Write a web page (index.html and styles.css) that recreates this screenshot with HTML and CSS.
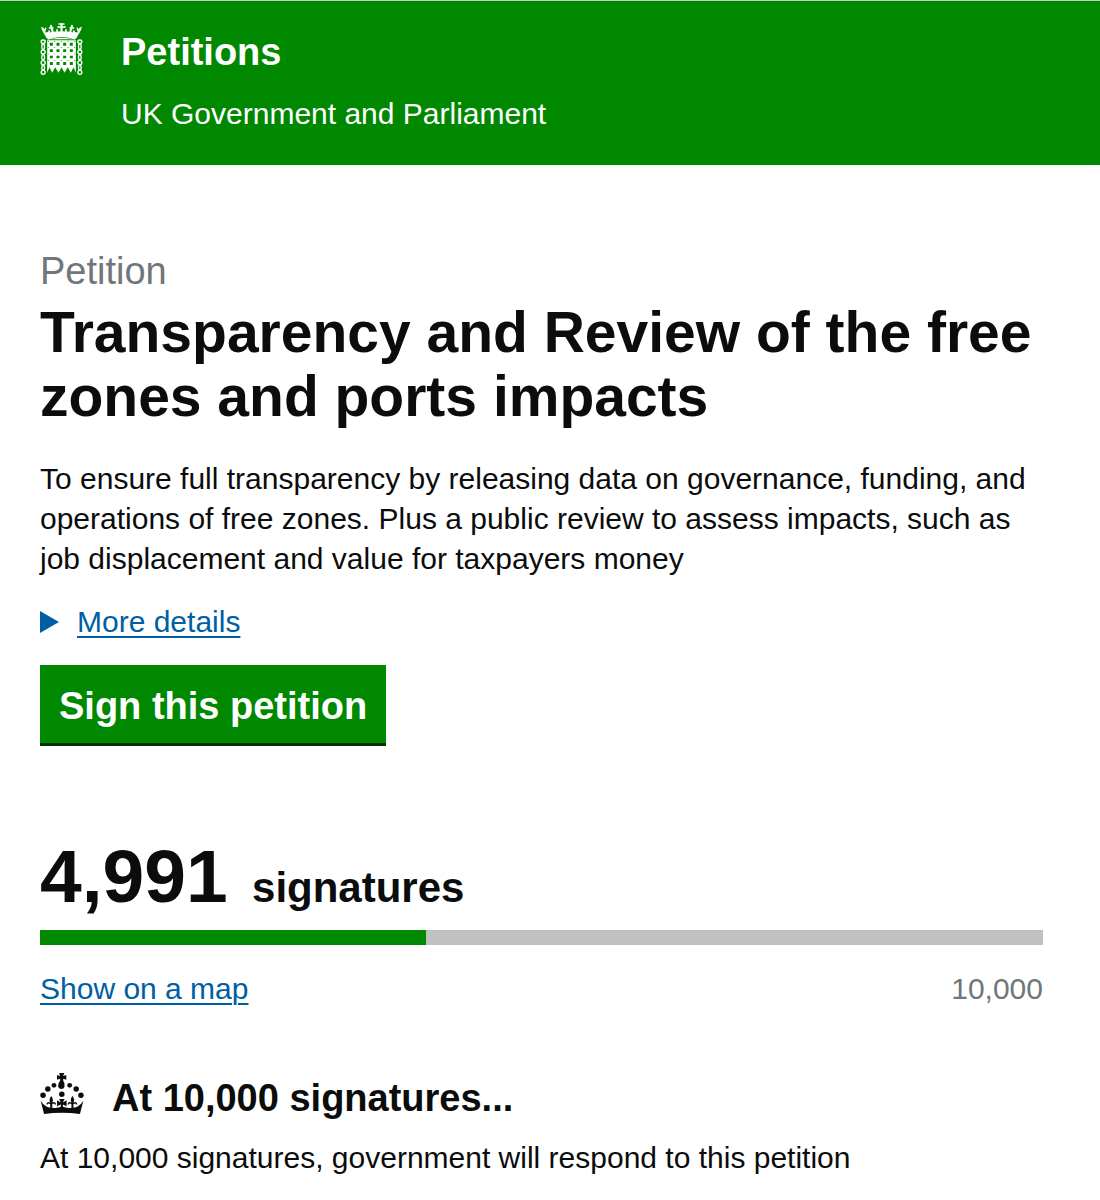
FILE: index.html
```html
<!DOCTYPE html>
<html lang="en">
<head>
  <meta charset="UTF-8">
  <meta name="viewport" content="width=device-width, initial-scale=1.0">
  <title>Transparency and Review of the free zones and ports impacts - Petitions</title>
  <link rel="stylesheet" href="styles.css">
</head>
<body>
  <header class="header">
    <svg class="portcullis" viewBox="0 0 126 156" aria-hidden="true">
      <!-- crown -->
      <g fill="none" stroke="#fff" stroke-width="6">
        <path d="M5 16 L21 44 M121 16 L105 44"/>
        <path d="M3 13 L14 22 L16 14 M123 13 L112 22 L110 14" stroke-width="4"/>
        <path d="M31 6 L38 32 M95 6 L88 32 M63 2 V30"/>
        <path d="M25 15 L39 15 M101 15 L87 15 M54 3 H72 M53 12 H73 M53 9 V15 M73 9 V15" stroke-width="4"/>
        <path d="M17 29 Q25 34 27 22 M109 29 Q101 34 99 22 M41 29 Q53 32 49 19 M85 29 Q73 32 77 19" stroke-width="5"/>
      </g>
      <path fill="#fff" d="M14 31 Q63 18 112 31 L104 50 Q63 34 22 50 Z"/>
      <path fill="#fff" d="M27 49 Q63 40 99 49 Z"/>
      <!-- gate -->
      <path fill="#fff" fill-rule="evenodd" d="M20 52 H106 V149 L99 133 L91 149 L82 133 L72 149 L63 133 L54 149 L44 133 L35 149 L27 133 L20 149 Z
        M28 59 h9 v9 h-9z M48 59 h9 v9 h-9z M68 59 h9 v9 h-9z M88 59 h9 v9 h-9z
        M28 79 h9 v8 h-9z M48 79 h9 v8 h-9z M68 79 h9 v8 h-9z M88 79 h9 v8 h-9z
        M28 98 h9 v8 h-9z M48 98 h9 v8 h-9z M68 98 h9 v8 h-9z M88 98 h9 v8 h-9z
        M28 117 h9 v9 h-9z M48 117 h9 v9 h-9z M68 117 h9 v9 h-9z M88 117 h9 v9 h-9z"/>
      <path fill="#008800" d="M22 54h3v2h-3z M41 54h3v2h-3z M61 54h3v2h-3z M81 54h3v2h-3z M101 54h3v2h-3z M22 73h3v2h-3z M41 73h3v2h-3z M61 73h3v2h-3z M81 73h3v2h-3z M101 73h3v2h-3z M22 92h3v2h-3z M41 92h3v2h-3z M61 92h3v2h-3z M81 92h3v2h-3z M101 92h3v2h-3z M22 111h3v2h-3z M41 111h3v2h-3z M61 111h3v2h-3z M81 111h3v2h-3z M101 111h3v2h-3z"/>
      <!-- chains -->
      <g fill="none" stroke="#fff" stroke-width="4">
        <ellipse cx="8" cy="56" rx="6" ry="5"/><ellipse cx="8" cy="71" rx="4" ry="8"/><ellipse cx="8" cy="87" rx="6" ry="6"/><ellipse cx="8" cy="103" rx="4" ry="8"/><ellipse cx="8" cy="119" rx="6" ry="6"/><ellipse cx="8" cy="134" rx="4" ry="7"/><circle cx="8" cy="148" r="6"/>
        <ellipse cx="118" cy="56" rx="6" ry="5"/><ellipse cx="118" cy="71" rx="4" ry="8"/><ellipse cx="118" cy="87" rx="6" ry="6"/><ellipse cx="118" cy="103" rx="4" ry="8"/><ellipse cx="118" cy="119" rx="6" ry="6"/><ellipse cx="118" cy="134" rx="4" ry="7"/><circle cx="118" cy="148" r="6"/>
      </g>
    </svg>
    <div class="header-text">
      <a class="header-title" href="#">Petitions</a>
      <p class="header-sub">UK Government and Parliament</p>
    </div>
  </header>

  <main class="content">
    <h1 class="page-title"><span class="context">Petition</span> Transparency and Review of the free zones and ports impacts</h1>

    <p class="intro">To ensure full transparency by releasing data on governance, funding, and operations of free zones. Plus a public review to assess impacts, such as job displacement and value for taxpayers money</p>

    <details class="more">
      <summary><span class="link">More details</span></summary>
    </details>

    <button class="sign-button" type="button">Sign this petition</button>

    <section class="signatures">
      <p class="count"><span class="count-number">4,991</span> <span class="count-label">signatures</span></p>
      <div class="graph"><div class="graph-bar" style="width: 38.5%"></div></div>
      <div class="graph-info">
        <a class="link" href="#">Show on a map</a>
        <span class="goal">10,000</span>
      </div>
    </section>

    <section class="threshold">
      <h2 class="threshold-title">
        <svg class="crown" viewBox="0 0 127 120" aria-hidden="true">
          <g fill="#0b0c0c">
            <path d="M55 0 H70 L67 9 L76 6 V20 L67 17 V23 Q73 30 71 40 Q69 47 62 47 Q55 47 52 40 Q51 30 58 23 V17 L49 20 V6 L58 9 Z"/>
            <circle cx="40" cy="36" r="7"/><circle cx="22" cy="47" r="8"/><circle cx="8" cy="65" r="8"/>
            <circle cx="86" cy="36" r="7"/><circle cx="105" cy="47" r="8"/><circle cx="119" cy="65" r="8"/>
            <circle cx="63" cy="62" r="8"/>
            <!-- band -->
            <path d="M1 81 Q8 93 18 98 Q26 102 32 100 Q40 104 48 102 Q57 101 63 97 Q70 101 79 102 Q87 104 95 100 Q101 102 109 98 Q119 93 126 81 L116 120 Q63 113 11 120 Z"/>
            <!-- fleurs and centre cross -->
            <path d="M32 67 Q40 77 35 87 V102 H29 V87 Q24 77 32 67 Z M94 67 Q102 77 97 87 V102 H91 V87 Q86 77 94 67 Z"/>
            <path d="M55 76 H71 L66 86 L77 80 V97 L66 92 V100 H60 V92 L49 97 V80 L60 86 Z"/>
          </g>
          <path d="M20 92 Q20 84 29 89 H35 Q44 84 44 92 M82 92 Q82 84 91 89 H97 Q106 84 106 92" fill="none" stroke="#0b0c0c" stroke-width="4"/>
        </svg>
        At 10,000 signatures...
      </h2>
      <p class="threshold-text">At 10,000 signatures, government will respond to this petition</p>
    </section>
  </main>
</body>
</html>
```

FILE: styles.css
```css
body {
  margin: 0;
  font-family: "Liberation Sans", Arial, sans-serif;
  font-size: 30px;
  line-height: 40px;
  color: #0b0c0c;
  background-color: #fff;
}
p, h1, h2 {
  margin: 0;
}
.header {
  display: flex;
  gap: 38px;
  padding: 22px 40px 31px;
  border-top: 1px solid #c8ccc8;
  background-color: #008800;
  color: #fff;
}
.portcullis {
  width: 43px;
  height: 52px;
}
.header-text {
  padding-top: 9px;
}
.header-title {
  display: block;
  margin-bottom: 22px;
  font-size: 38px;
  font-weight: bold;
  color: #fff;
  text-decoration: none;
}
.content {
  padding: 84px 57px 24px 40px;
}
.page-title {
  margin-bottom: 30px;
  font-size: 57px;
  line-height: 64px;
}
.context {
  display: block;
  margin-bottom: 7px;
  font-size: 38px;
  line-height: 44px;
  font-weight: normal;
  color: #6f777b;
}
.intro {
  padding-top: 1px;
}
.link {
  color: #005ea5;
  text-decoration: underline;
  text-decoration-thickness: 2px;
  text-underline-offset: 4px;
}
.more {
  margin: 23px 0;
}
.more summary {
  display: flex;
  align-items: center;
  gap: 18px;
  cursor: pointer;
}
.more summary::before {
  content: "";
  border-left: 19px solid #005ea5;
  border-top: 11px solid transparent;
  border-bottom: 11px solid transparent;
}
.sign-button {
  display: block;
  padding: 21px 19px 17px;
  border: none;
  border-bottom: 3px solid #003300;
  background-color: #008800;
  color: #fff;
  font-family: inherit;
  font-size: 38px;
  font-weight: bold;
  line-height: 40px;
  cursor: pointer;
}
.signatures {
  margin-top: 92px;
}
.count {
  font-weight: bold;
  line-height: 76px;
}
.count-number {
  margin-right: 16px;
  font-size: 75px;
}
.count-label {
  font-size: 42px;
}
.graph {
  background-color: #bfc1c3;
}
.graph-bar {
  height: 15px;
  background-color: #008800;
}
.graph-info {
  display: flex;
  justify-content: space-between;
  margin-top: 24px;
}
.goal {
  color: #6f777b;
}
.threshold {
  margin-top: 64px;
}
.threshold-title {
  display: flex;
  gap: 28px;
  margin-bottom: 15px;
  font-size: 38px;
  line-height: 50px;
}
.crown {
  width: 44px;
  height: 41px;
}
```
